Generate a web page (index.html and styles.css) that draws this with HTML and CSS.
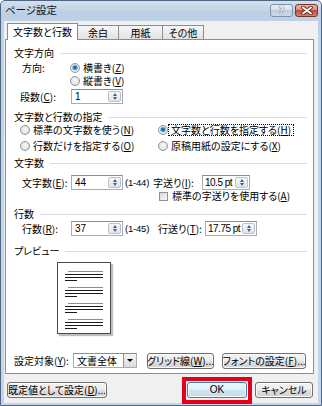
FILE: index.html
```html
<!DOCTYPE html>
<html lang="ja">
<head>
    <meta charset="UTF-8">
    <title>ページ設定</title>
    <link rel="stylesheet" href="styles.css">
</head>
<body>

    <div class="window">
        <div class="titlebar">
            <span class="title">ページ設定</span>
            <div class="caption">
                <span class="cap help">?</span>
                <span class="cap close">
                    <svg width="12" height="9" viewBox="0 0 12 9">
                        <path d="M2 1.5 L10 7.5 M10 1.5 L2 7.5" stroke="#5e2119" stroke-width="3.6" stroke-linecap="round"/>
                        <path d="M2 1.5 L10 7.5 M10 1.5 L2 7.5" stroke="#fff" stroke-width="2" stroke-linecap="round"/>
                    </svg>
                </span>
            </div>
        </div>

        <div class="client">
            <!-- tab strip -->
            <div class="tabs">
                <div class="tab active t1">文字数と行数</div>
                <div class="tab t2">余白</div>
                <div class="tab t3">用紙</div>
                <div class="tab t4">その他</div>
            </div>

            <div class="panel">
                <div class="group-title gt-dir">文字方向</div>
                <div class="row r-dir1">
                    <span class="lbl w48">方向:</span>
                    <span class="radio checked"><i></i>横書き(<u>Z</u>)</span>
                </div>
                <div class="row r-dir2">
                    <span class="radio"><i></i>縦書き(<u>V</u>)</span>
                </div>
                <div class="row field r-cols">
                    <span class="lbl w51">段数(<u>C</u>):</span>
                    <span class="spin w52"><span class="val">1</span><span class="spin-btn"><b class="up"></b><b class="down"></b></span></span>
                </div>

                <div class="group-title gt-mode">文字数と行数の指定</div>
                <div class="row r-mode1">
                    <span class="radio col"><i></i>標準の文字数を使う(<u>N</u>)</span>
                    <span class="radio checked"><i class="tight"></i><span class="focus">文字数と行数を指定する(<u>H</u>)</span></span>
                </div>
                <div class="row r-mode2">
                    <span class="radio col"><i></i>行数だけを指定する(<u>O</u>)</span>
                    <span class="radio"><i></i>原稿用紙の設定にする(<u>X</u>)</span>
                </div>

                <div class="group-title gt-chars">文字数</div>
                <div class="row field r-chars">
                    <span class="lbl w49">文字数(<u>E</u>):</span>
                    <span class="spin w52"><span class="val">44</span><span class="spin-btn"><b class="up"></b><b class="down"></b></span></span>
                    <span class="range w28">(1-44)</span>
                    <span class="lbl w49">字送り(<u>I</u>):</span>
                    <span class="spin w48"><span class="val unit">10.5 pt</span><span class="spin-btn"><b class="up"></b><b class="down"></b></span></span>
                </div>
                <div class="row r-check">
                    <span class="check"><i></i>標準の字送りを使用する(<u>A</u>)</span>
                </div>

                <div class="group-title gt-lines">行数</div>
                <div class="row field r-lines">
                    <span class="lbl w49">行数(<u>R</u>):</span>
                    <span class="spin w52"><span class="val">37</span><span class="spin-btn"><b class="up"></b><b class="down"></b></span></span>
                    <span class="range w33">(1-45)</span>
                    <span class="lbl w47">行送り(<u>T</u>):</span>
                    <span class="spin w52"><span class="val unit">17.75 pt</span><span class="spin-btn"><b class="up"></b><b class="down"></b></span></span>
                </div>

                <div class="group-title gt-preview">プレビュー</div>
                <div class="page">
                    <svg width="52" height="70" viewBox="0 0 52 70">
                        <g stroke-width="1">
                            <line x1="10" y1="8.5" x2="45" y2="8.5" stroke="#8c8c8c"/>
                            <line x1="7" y1="11.5" x2="45" y2="11.5" stroke="#1a1a1a"/>
                            <line x1="7" y1="14.5" x2="45" y2="14.5" stroke="#1a1a1a"/>
                            <line x1="7" y1="17.5" x2="19" y2="17.5" stroke="#1a1a1a"/>

                            <line x1="10" y1="24.5" x2="45" y2="24.5" stroke="#8c8c8c"/>
                            <line x1="7" y1="27.5" x2="45" y2="27.5" stroke="#1a1a1a"/>
                            <line x1="7" y1="30.5" x2="45" y2="30.5" stroke="#1a1a1a"/>
                            <line x1="7" y1="33.5" x2="19" y2="33.5" stroke="#1a1a1a"/>

                            <line x1="10" y1="40.5" x2="45" y2="40.5" stroke="#8c8c8c"/>
                            <line x1="7" y1="43.5" x2="45" y2="43.5" stroke="#1a1a1a"/>
                            <line x1="7" y1="46.5" x2="45" y2="46.5" stroke="#1a1a1a"/>
                            <line x1="7" y1="49.5" x2="19" y2="49.5" stroke="#1a1a1a"/>

                            <line x1="10" y1="56.5" x2="45" y2="56.5" stroke="#8c8c8c"/>
                            <line x1="7" y1="59.5" x2="45" y2="59.5" stroke="#1a1a1a"/>
                            <line x1="7" y1="62.5" x2="45" y2="62.5" stroke="#1a1a1a"/>
                            <line x1="7" y1="65.5" x2="19" y2="65.5" stroke="#1a1a1a"/>
                        </g>
                    </svg>
                </div>

                <div class="row field r-apply">
                    <span class="lbl w59">設定対象(<u>Y</u>):</span>
                    <span class="select"><span class="val">文書全体</span><span class="drop"><b></b></span></span>
                    <span class="btn btn-grid">グリッド線(<u>W</u>)...</span>
                    <span class="btn btn-font">フォントの設定(<u>F</u>)...</span>
                </div>
            </div>

            <div class="footer">
                <span class="btn btn-default">既定値として設定(<u>D</u>)...</span>
                <span class="btn btn-ok">OK</span>
                <span class="btn btn-cancel">キャンセル</span>
            </div>
        </div>
    </div>

</body>
</html>
```

FILE: styles.css
```css
* {
    box-sizing: border-box;
}
body {
    margin: 0;
    background-color: #fff;
    font-family: "Noto Sans CJK JP", "Noto Sans", sans-serif;
    font-size: 10px;
    line-height: 12px;
    color: #000;
    font-feature-settings: "palt";
}
u {
    text-decoration: underline;
    text-underline-offset: 1px;
}
b {
    display: block;
}

/* Window frame */
.window {
    width: 322px;
    height: 406px;
    display: flex;
    flex-direction: column;
    padding: 0 3px 2px;
    border: 1px solid #4f6683;
    border-radius: 5px 5px 0 0;
    background: linear-gradient(180deg, #d3e0ee 0, #bccfe4 12px, #c3d4e7 40px, #c6d6e8 100%);
}
.titlebar {
    height: 20px;
    display: flex;
    justify-content: space-between;
}
.title {
    margin: 3px 0 0 1px;
    font-size: 10.5px;
    color: #141414;
}
.caption {
    display: flex;
    gap: 2px;
    margin-top: 3px;
}
.cap {
    width: 23px;
    height: 13px;
    border-radius: 3px;
    display: flex;
    align-items: center;
    justify-content: center;
}
.help {
    border: 1px solid #7f93ab;
    background: linear-gradient(#e8eef6 0, #d5dfec 50%, #bfcddf 50%, #ccd9e8 100%);
    color: #f4f7fb;
    font-family: "DejaVu Sans", sans-serif;
    font-weight: bold;
    font-size: 10px;
    text-shadow: 0 0 1px #4d5f78, 0 0 1px #4d5f78;
}
.close {
    border: 1px solid #76362d;
    background: linear-gradient(#eab0a5 0, #da8777 50%, #c14c36 50%, #d6826c 100%);
}

/* Client area */
.client {
    flex: 1;
    display: flex;
    flex-direction: column;
    padding: 2px 4px 0 1px;
    background-color: #f0f0f0;
}

/* Tabs */
.tabs {
    height: 16px;
    display: flex;
    align-items: flex-end;
    padding-left: 2px;
    position: relative;
    z-index: 1;
}
.tab {
    height: 14px;
    border: 1px solid #898c95;
    border-bottom: none;
    background: linear-gradient(#f7f7f7, #e1e1e1);
    text-align: center;
    line-height: 13px;
}
.tab + .tab {
    margin-left: -1px;
}
.tab.active {
    height: 17px;
    margin-bottom: -1px;
    background: #fff;
    line-height: 15px;
    position: relative;
    z-index: 2;
}
.t1 { width: 71px; }
.t2 { width: 42px; }
.t3 { width: 45px; }
.t4 { width: 42px; }

.panel {
    height: 335px;
    border: 1px solid #898c95;
    background-color: #fff;
    padding-right: 6px;
}

/* Group headers */
.group-title {
    display: flex;
    align-items: center;
    height: 12px;
    margin-left: 8px;
}
.group-title::after {
    content: "";
    flex: 1;
    height: 1px;
    margin-left: 6px;
    background-color: #d5dfe5;
}
.gt-dir { margin-top: 7px; }
.gt-mode { margin-top: 7px; }
.gt-chars { margin-top: 5px; }
.gt-lines { margin-top: 7px; }
.gt-preview { margin-top: 9px; }

/* Rows */
.row {
    display: flex;
    align-items: center;
    height: 12px;
    white-space: nowrap;
}
.row.field {
    height: 15px;
}
.r-dir1 { margin: 3px 0 0 16px; }
.r-dir2 { margin: 1px 0 0 64px; }
.r-cols { margin: 2px 0 0 14px; }
.r-mode1 { margin: 1px 0 0 14px; }
.r-mode2 { margin: 4px 0 0 14px; }
.r-chars { margin: 6px 0 0 16px; }
.r-check { margin: 1px 0 0 153px; height: 10px; }
.r-lines { margin: 1px 0 0 16px; }
.r-apply { margin: 19px 0 0 8px; }

.lbl { display: inline-block; }
.w47 { width: 47px; }
.w48 { width: 48px; }
.w49 { width: 49px; }
.w51 { width: 51px; }
.w59 { width: 59px; }
.range {
    display: inline-block;
    margin-left: 2px;
    font-family: "Liberation Sans", sans-serif;
    font-size: 9.5px;
    letter-spacing: -0.2px;
}
.w28 { width: 28px; }
.w33 { width: 33px; }
.col { width: 138px; }

/* Radio buttons and checkbox */
.radio,
.check {
    display: inline-flex;
    align-items: center;
}
.radio i {
    width: 10px;
    height: 10px;
    margin-right: 3px;
    border: 1px solid #8f9296;
    border-radius: 50%;
    background: radial-gradient(circle at 50% 45%, #f8f8f8 0, #e2e2e2 70%, #d4d4d4 100%);
}
.radio.checked i {
    background: radial-gradient(circle at 50% 45%, #0f5da7 0, #2a7cc7 1.6px, #8fc1ea 2.6px, #f3f3f3 3.4px, #dcdcdc 100%);
}
.radio i.tight {
    margin-right: 0;
}
.focus {
    padding: 0 2px;
    border: 1px dotted #000;
    line-height: 10px;
}
.check i {
    width: 9px;
    height: 9px;
    margin-right: 4px;
    border: 1px solid #8f9296;
    background: linear-gradient(135deg, #dadada, #f8f8f8);
}

/* Spin boxes */
.spin {
    display: inline-flex;
    height: 15px;
    border: 1px solid #abadb3;
    border-top-color: #8a8d94;
    background-color: #fff;
}
.w52 { width: 52px; }
.w48 { width: 48px; }
.spin .val {
    flex: 1;
    padding-left: 3px;
    font-family: "Liberation Sans", sans-serif;
    font-size: 10px;
    line-height: 13px;
    overflow: hidden;
}
.spin .val.unit {
    padding-left: 2px;
    letter-spacing: -0.5px;
}
.spin-btn {
    width: 13px;
    margin: 1px;
    border: 1px solid #b9c2cc;
    border-radius: 2px;
    background: linear-gradient(#f6f8fa, #dfe5ec);
    display: flex;
    flex-direction: column;
    align-items: center;
    justify-content: space-evenly;
}
.spin-btn .up {
    width: 0;
    height: 0;
    border-left: 2.5px solid transparent;
    border-right: 2.5px solid transparent;
    border-bottom: 3px solid #4a5f7c;
}
.spin-btn .down {
    width: 0;
    height: 0;
    border-left: 2.5px solid transparent;
    border-right: 2.5px solid transparent;
    border-top: 3px solid #4a5f7c;
}

/* Drop-down */
.select {
    display: inline-flex;
    width: 64px;
    height: 15px;
    border: 1px solid #abadb3;
    border-top-color: #8a8d94;
    background-color: #fff;
}
.select .val {
    flex: 1;
    padding-left: 3px;
    line-height: 13px;
}
.drop {
    width: 13px;
    border-left: 1px solid #8d9199;
    background: linear-gradient(#f5f5f5, #dcdcdc);
    display: flex;
    align-items: center;
    justify-content: center;
}
.drop b {
    width: 0;
    height: 0;
    border-left: 3px solid transparent;
    border-right: 3px solid transparent;
    border-top: 3px solid #000;
}

/* Preview page */
.page {
    width: 54px;
    height: 72px;
    margin: 5px 0 0 51px;
    border: 1px solid #4a4a4a;
    background-color: #fff;
    box-shadow: 2px 2px 1px #bdbdbd;
}
.page svg {
    display: block;
}

/* Buttons */
.btn {
    display: inline-flex;
    align-items: center;
    justify-content: center;
    height: 16px;
    border: 1px solid #707070;
    border-radius: 3px;
    background: linear-gradient(#f3f3f3 0, #ececec 50%, #dedede 50%, #d2d2d2 100%);
    box-shadow: inset 0 0 0 1px #fbfbfb;
    white-space: nowrap;
}
.btn-grid {
    width: 67px;
    margin-left: 10px;
}
.btn-font {
    width: 84px;
    margin-left: 8px;
}

.footer {
    display: flex;
    margin-top: 8px;
    padding-left: 2px;
}
.btn-default { width: 100px; }
.btn-ok {
    width: 60px;
    margin-left: 80px;
    border-color: #3c7fb1;
    background: linear-gradient(#eef6fb 0, #e0eef8 50%, #cfe4f3 50%, #c3dcee 100%);
    font-family: "Liberation Sans", sans-serif;
    position: relative;
}
/* red highlight frame around OK */
.btn-ok::after {
    content: "";
    position: absolute;
    left: -6px;
    right: -6px;
    top: -6px;
    bottom: -7px;
    border: 4px solid #e4001b;
}
.btn-cancel {
    width: 58px;
    margin-left: 8px;
}
```
